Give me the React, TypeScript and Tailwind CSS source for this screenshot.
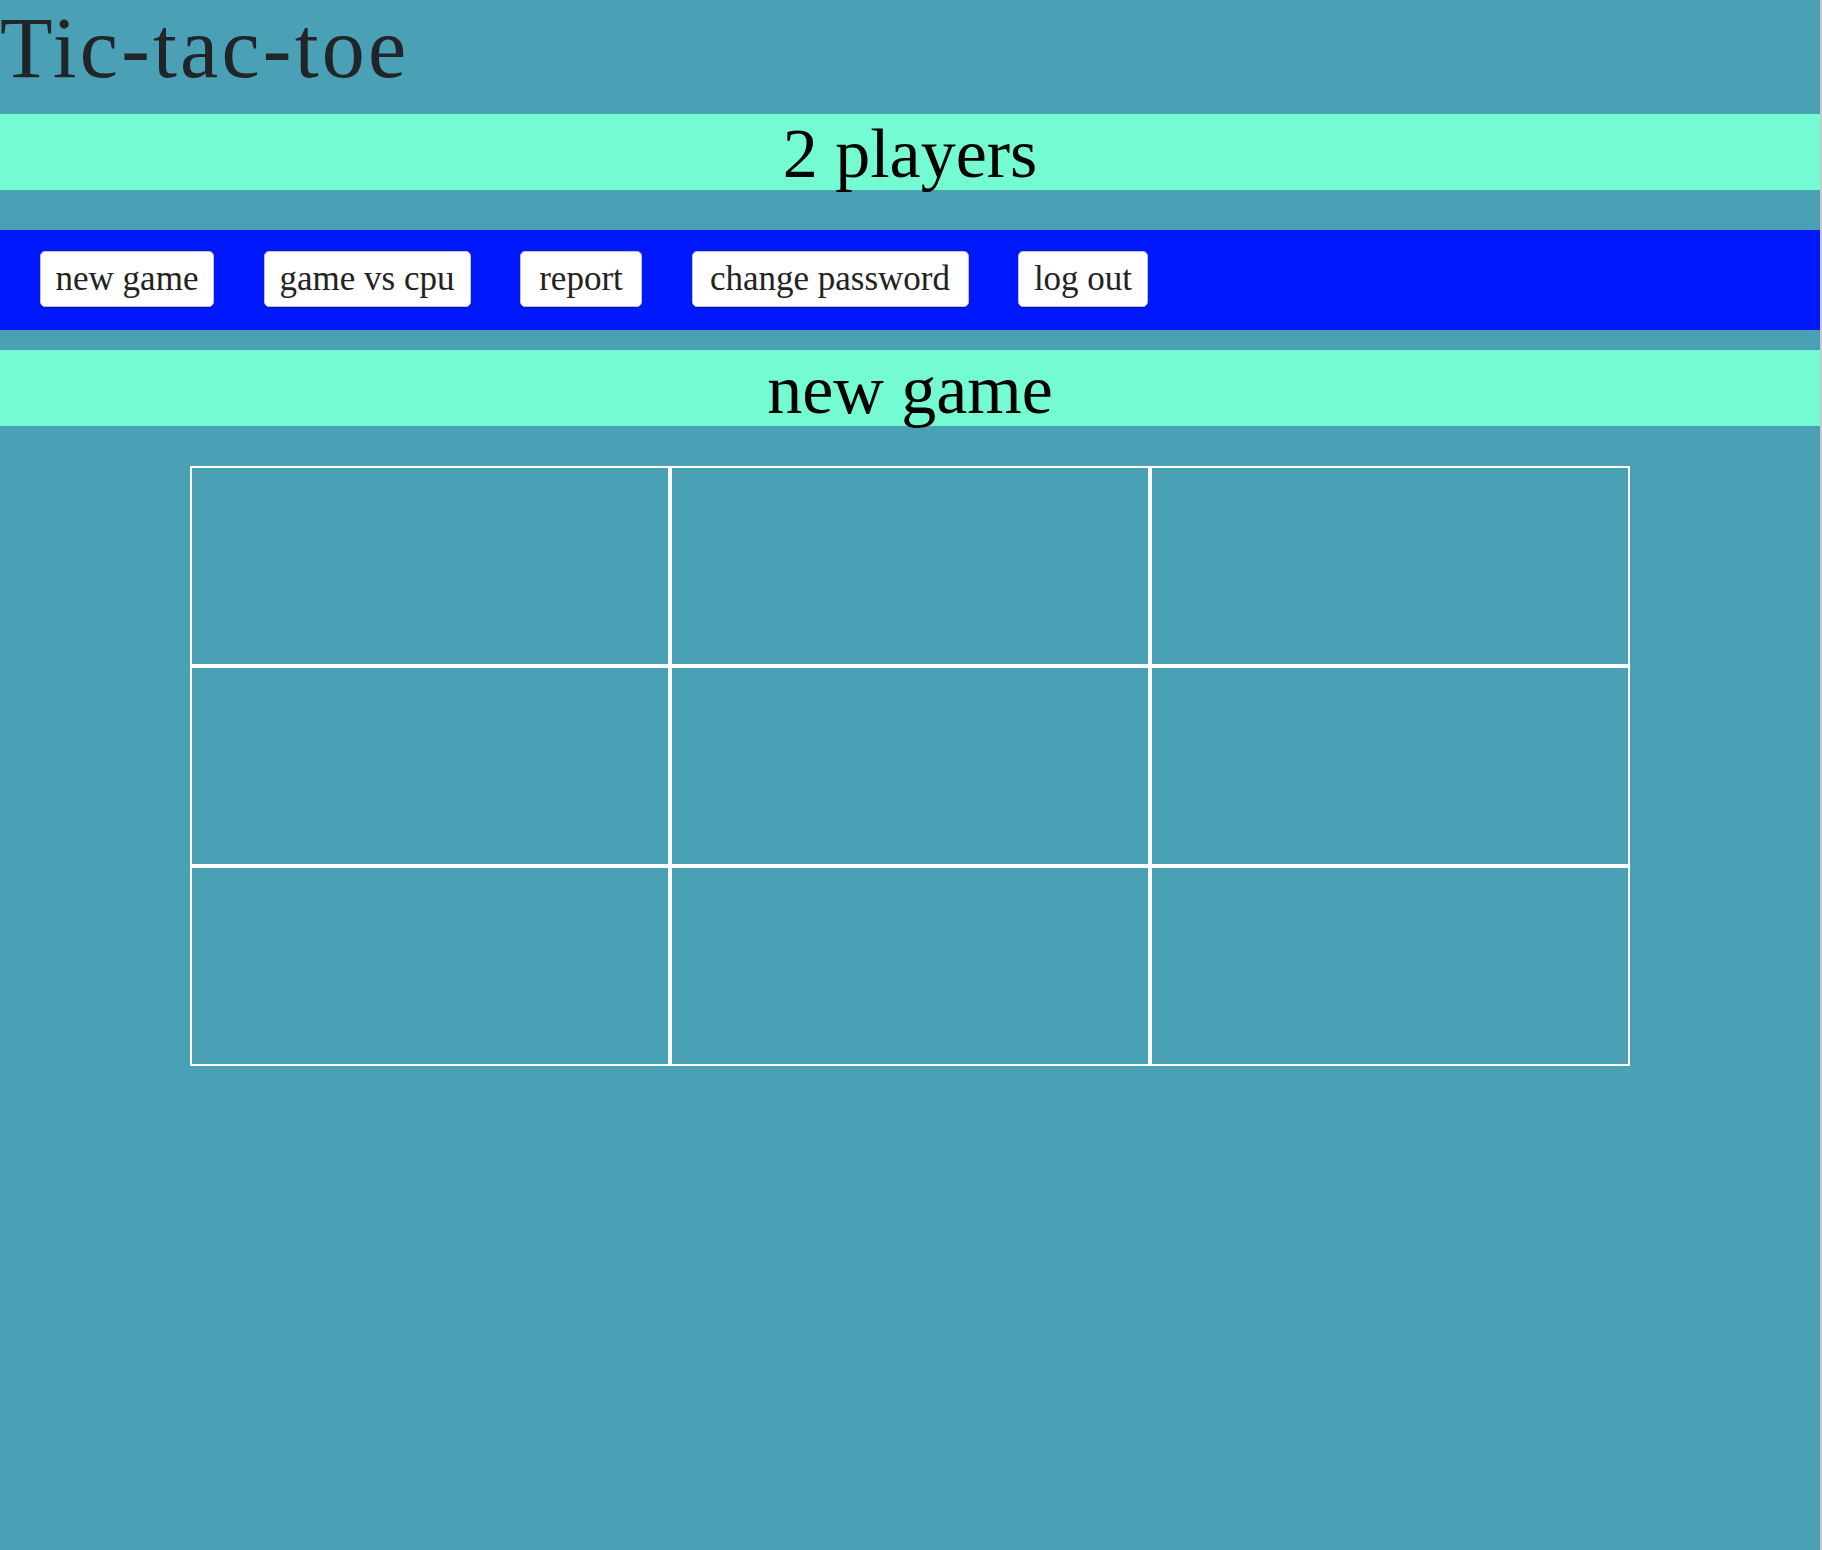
import React from 'react';

const BUTTONS = [
  { label: 'new game', w: 'w-[174px]' },
  { label: 'game vs cpu', w: 'w-[207px]' },
  { label: 'report', w: 'w-[122px]' },
  { label: 'change password', w: 'w-[277px]' },
  { label: 'log out', w: 'w-[130px]' },
];

const serif = { fontFamily: '"Liberation Serif", "DejaVu Serif", serif' };

export default function App() {
  const cells = Array.from({ length: 9 }, (_, i) => i);

  return (
    <div className="flex min-h-[1550px] bg-[#c9c9c9]" style={serif}>
      <div className="w-[1820px] min-h-[1550px] bg-[#4aa0b5]">
        <h1 className="text-[86px] leading-[96px] tracking-[3.2px] pb-[18px] font-normal text-[#212529]">
          Tic-tac-toe
        </h1>

        <div className="h-[76px] bg-[#75fbd1] text-center text-[70px] leading-[80px] text-black">
          2 players
        </div>

        <div className="mt-[40px] h-[100px] bg-[#0019fc] flex items-start gap-[49.5px] pl-[40px] pt-[21px]">
          {BUTTONS.map(b => (
            <button key={b.label}
              className={`${b.w} h-[56px] bg-white border border-[#c2c2c2] rounded-[5px] shadow-[0_1px_1px_rgba(0,0,0,0.25)] text-[35px] leading-[54px] text-[#222] text-center`}>
              {b.label}
            </button>
          ))}
        </div>

        <div className="mt-[20px] h-[76px] bg-[#75fbd1] text-center text-[70px] leading-[80px] text-black">
          new game
        </div>

        <div className="mt-[40px] mx-auto w-[1440px] grid grid-cols-3">
          {cells.map(c => (
            <div key={c} className="h-[200px] border-2 border-white" />
          ))}
        </div>
      </div>
    </div>
  );
}
